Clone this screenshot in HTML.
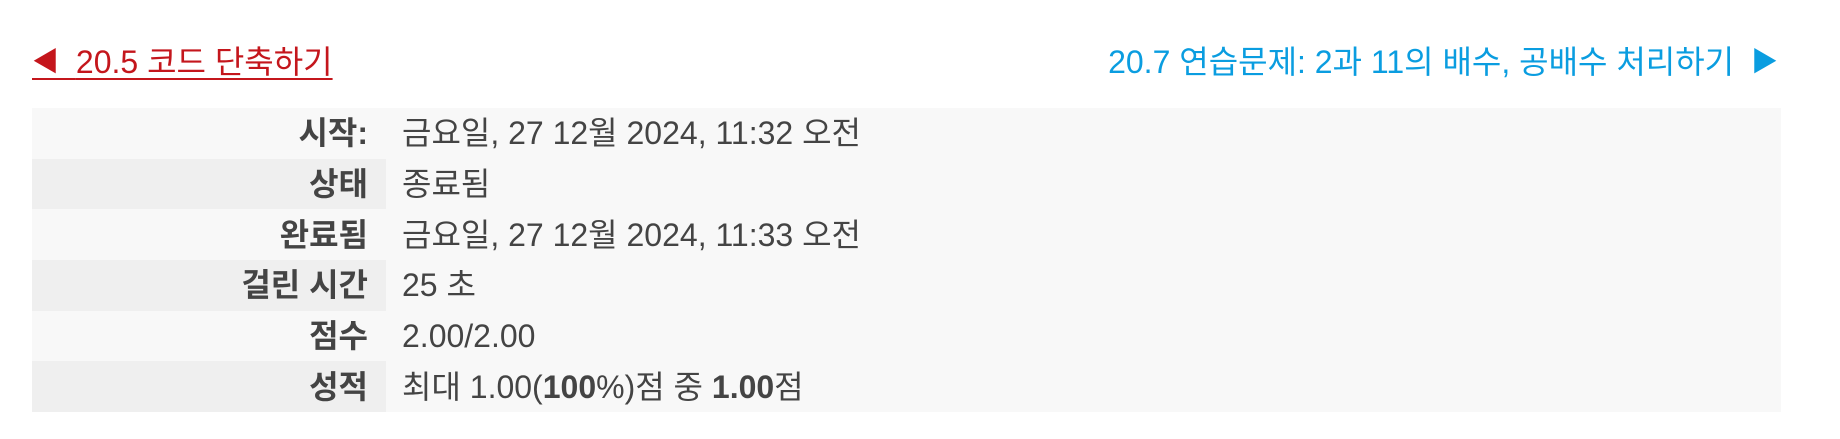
<!DOCTYPE html>
<html><head><meta charset="utf-8"><style>
html,body{margin:0;padding:0;background:#fff;width:1840px;height:439px;overflow:hidden}
body{font-family:"Liberation Sans","Noto Sans CJK KR",sans-serif;font-size:32px;color:#444}
.nav{position:absolute;top:43px;font-size:32px;line-height:38px}
.prev{left:32px;color:#c4161c;text-decoration:underline;text-decoration-thickness:2px;text-underline-offset:5px}
.next{right:62px;color:#0a9de0}
.tri{font-size:27px;vertical-align:2px}
.sp{letter-spacing:8px}
table{position:absolute;left:32px;top:108px;width:1749px;border-collapse:collapse}
td{height:50.7px;padding:0;background:#f8f8f8;line-height:36px}
th{width:336px;text-align:right;padding:0 18px 0 0;font-weight:bold;background:#f8f8f8;color:#444;line-height:36px}
tr:nth-child(even) th{background:#efefef}
td{padding-left:16px}
</style></head><body>
<div class="nav prev"><span class="tri">◀</span><span class="sp">&nbsp;</span>20.5 코드 단축하기</div>
<div class="nav next">20.7 연습문제: 2과 11의 배수, 공배수 처리하기<span class="sp">&nbsp;</span><span class="tri">▶</span></div>
<table>
<tr><th>시작:</th><td>금요일, 27 12월 2024, 11:32 오전</td></tr>
<tr><th>상태</th><td>종료됨</td></tr>
<tr><th>완료됨</th><td>금요일, 27 12월 2024, 11:33 오전</td></tr>
<tr><th>걸린 시간</th><td>25 초</td></tr>
<tr><th>점수</th><td>2.00/2.00</td></tr>
<tr><th>성적</th><td>최대 1.00(<b>100</b>%)점 중 <b>1.00</b>점</td></tr>
</table>
</body></html>
